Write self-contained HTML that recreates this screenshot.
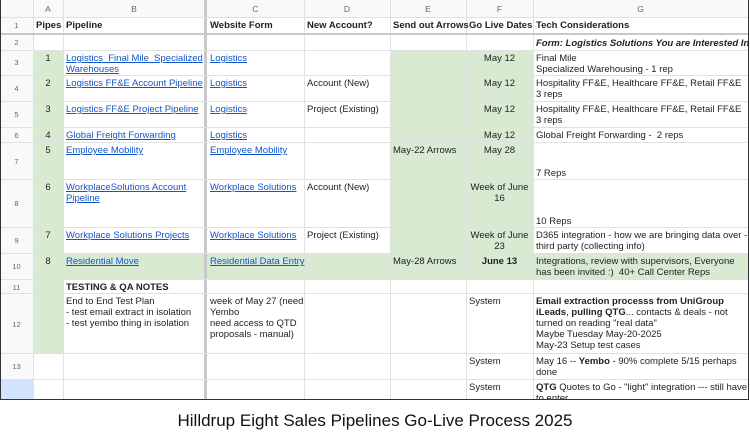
<!DOCTYPE html>
<html><head><meta charset="utf-8"><style>
body{margin:0;width:750px;height:438px;background:#fff;position:relative;overflow:hidden;font-family:"Liberation Sans",Arial,sans-serif;font-size:9.5px;color:#222}
.a{position:absolute}
.g{position:absolute;background:#d9ead3}
.vl{position:absolute;top:0;height:400px;width:1px;background:#e1e1e1}
.hl{position:absolute;left:0;width:748px;height:1px;background:#e1e1e1}
.t{position:absolute;line-height:11px;white-space:nowrap}
.l{color:#1155cc;text-decoration:underline}
.b{font-weight:bold}
.h{color:#666;font-size:8.5px;text-align:center}
.rn{position:absolute;left:0;width:33px;text-align:center;color:#666;font-size:7.5px}
.c{text-align:center}
</style></head><body>
<div class="a" style="left:0;top:0;width:748px;height:17px;background:#f8f9fa"></div>
<div class="a" style="left:0;top:0;width:33px;height:400px;background:#f8f9fa"></div>
<div class="a" style="left:0;top:379px;width:33px;height:21px;background:#d3e3fd"></div>
<div class="g" style="left:33px;top:50px;width:30px;height:303px"></div>
<div class="g" style="left:390px;top:50px;width:143px;height:229px"></div>
<div class="g" style="left:63px;top:253px;width:685px;height:26px"></div>
<div class="vl" style="left:33px"></div><div class="vl" style="left:63px"></div>
<div class="vl" style="left:204px;width:3px;background:#c8c8c8"></div>
<div class="vl" style="left:304px"></div><div class="vl" style="left:390px"></div>
<div class="vl" style="left:466px"></div><div class="vl" style="left:533px"></div>
<div class="hl" style="top:17px"></div>
<div class="hl" style="top:33px;height:2px;background:#c8c8c8"></div>
<div class="hl" style="top:50px"></div><div class="hl" style="top:75px"></div>
<div class="hl" style="top:101px"></div><div class="hl" style="top:127px"></div>
<div class="hl" style="top:142px"></div><div class="hl" style="top:179px"></div>
<div class="hl" style="top:227px"></div><div class="hl" style="top:253px"></div>
<div class="hl" style="top:279px"></div><div class="hl" style="top:293px"></div>
<div class="hl" style="top:353px"></div><div class="hl" style="top:379px"></div>
<div class="a" style="left:0;top:0;width:747px;height:399px;border:1px solid #333;border-top:none;box-sizing:content-box"></div>
<div class="t h" style="left:33px;top:4px;width:30px">A</div>
<div class="t h" style="left:63px;top:4px;width:142px">B</div>
<div class="t h" style="left:207px;top:4px;width:97px">C</div>
<div class="t h" style="left:304px;top:4px;width:86px">D</div>
<div class="t h" style="left:390px;top:4px;width:76px">E</div>
<div class="t h" style="left:466px;top:4px;width:67px">F</div>
<div class="t h" style="left:533px;top:4px;width:215px">G</div>
<div class="rn" style="top:21px">1</div><div class="rn" style="top:38px">2</div>
<div class="rn" style="top:58px">3</div><div class="rn" style="top:84px">4</div>
<div class="rn" style="top:110px">5</div><div class="rn" style="top:131px">6</div>
<div class="rn" style="top:157px">7</div><div class="rn" style="top:199px">8</div>
<div class="rn" style="top:236px">9</div><div class="rn" style="top:262px">10</div>
<div class="rn" style="top:283px">11</div><div class="rn" style="top:320px">12</div>
<div class="rn" style="top:362px">13</div>
<div class="t b" style="left:36px;top:20px">Pipes</div>
<div class="t b" style="left:66px;top:20px">Pipeline</div>
<div class="t b" style="left:210px;top:20px">Website Form</div>
<div class="t b" style="left:307px;top:20px">New Account?</div>
<div class="t b" style="left:393px;top:20px">Send out Arrows</div>
<div class="t b" style="left:469px;top:20px">Go Live Dates</div>
<div class="t b" style="left:536px;top:20px">Tech Considerations</div>
<div class="t b" style="left:536px;top:38px;font-style:italic">Form: Logistics Solutions You are Interested In</div>
<div class="t c" style="left:33px;top:53px;width:30px">1</div>
<div class="t c" style="left:33px;top:78px;width:30px">2</div>
<div class="t c" style="left:33px;top:104px;width:30px">3</div>
<div class="t c" style="left:33px;top:130px;width:30px">4</div>
<div class="t c" style="left:33px;top:145px;width:30px">5</div>
<div class="t c" style="left:33px;top:182px;width:30px">6</div>
<div class="t c" style="left:33px;top:230px;width:30px">7</div>
<div class="t c" style="left:33px;top:256px;width:30px">8</div>
<div class="t l" style="left:66px;top:53px">Logistics_Final Mile_Specialized<br>Warehouses</div>
<div class="t l" style="left:66px;top:78px">Logistics FF&amp;E Account Pipeline</div>
<div class="t l" style="left:66px;top:104px">Logistics FF&amp;E Project Pipeline</div>
<div class="t l" style="left:66px;top:130px">Global Freight Forwarding</div>
<div class="t l" style="left:66px;top:145px">Employee Mobility</div>
<div class="t l" style="left:66px;top:182px">WorkplaceSolutions Account<br>Pipeline</div>
<div class="t l" style="left:66px;top:230px">Workplace Solutions Projects</div>
<div class="t l" style="left:66px;top:256px">Residential Move</div>
<div class="t b" style="left:66px;top:282px">TESTING &amp; QA NOTES</div>
<div class="t" style="left:66px;top:296px">End to End Test Plan<br>- test email extract in isolation<br>- test yembo thing in isolation</div>
<div class="t l" style="left:210px;top:53px">Logistics</div>
<div class="t l" style="left:210px;top:78px">Logistics</div>
<div class="t l" style="left:210px;top:104px">Logistics</div>
<div class="t l" style="left:210px;top:130px">Logistics</div>
<div class="t l" style="left:210px;top:145px">Employee Mobility</div>
<div class="t l" style="left:210px;top:182px">Workplace Solutions</div>
<div class="t l" style="left:210px;top:230px">Workplace Solutions</div>
<div class="t l" style="left:210px;top:256px">Residential Data Entry</div>
<div class="t" style="left:210px;top:296px">week of May 27 (need<br>Yembo<br>need access to QTD<br>proposals - manual)</div>
<div class="t" style="left:307px;top:78px">Account (New)</div>
<div class="t" style="left:307px;top:104px">Project (Existing)</div>
<div class="t" style="left:307px;top:182px">Account (New)</div>
<div class="t" style="left:307px;top:230px">Project (Existing)</div>
<div class="t" style="left:393px;top:145px">May-22 Arrows</div>
<div class="t" style="left:393px;top:256px">May-28 Arrows</div>
<div class="t c" style="left:466px;top:53px;width:67px">May 12</div>
<div class="t c" style="left:466px;top:78px;width:67px">May 12</div>
<div class="t c" style="left:466px;top:104px;width:67px">May 12</div>
<div class="t c" style="left:466px;top:130px;width:67px">May 12</div>
<div class="t c" style="left:466px;top:145px;width:67px">May 28</div>
<div class="t c" style="left:466px;top:182px;width:67px">Week of June<br>16</div>
<div class="t c" style="left:466px;top:230px;width:67px">Week of June<br>23</div>
<div class="t c b" style="left:466px;top:256px;width:67px">June 13</div>
<div class="t" style="left:469px;top:296px">System</div>
<div class="t" style="left:469px;top:356px">System</div>
<div class="t" style="left:469px;top:382px">System</div>
<div class="t" style="left:536px;top:53px">Final Mile<br>Specialized Warehousing - 1 rep</div>
<div class="t" style="left:536px;top:78px">Hospitality FF&amp;E, Healthcare FF&amp;E, Retail FF&amp;E<br>3 reps</div>
<div class="t" style="left:536px;top:104px">Hospitality FF&amp;E, Healthcare FF&amp;E, Retail FF&amp;E<br>3 reps</div>
<div class="t" style="left:536px;top:130px">Global Freight Forwarding -&nbsp; 2 reps</div>
<div class="t" style="left:536px;top:168px">7 Reps</div>
<div class="t" style="left:536px;top:216px">10 Reps</div>
<div class="t" style="left:536px;top:230px">D365 integration - how we are bringing data over -<br>third party (collecting info)</div>
<div class="t" style="left:536px;top:256px">Integrations, review with supervisors, Everyone<br>has been invited :)&nbsp; 40+ Call Center Reps</div>
<div class="t" style="left:536px;top:296px"><b>Email extraction processs from UniGroup<br>iLeads</b>, <b>pulling QTG</b>... contacts &amp; deals - not<br>turned on reading "real data"<br>Maybe Tuesday May-20-2025<br>May-23 Setup test cases</div>
<div class="t" style="left:536px;top:356px">May 16 -- <b>Yembo</b> - 90% complete 5/15 perhaps<br>done</div>
<div class="a" style="left:536px;top:382px;width:211px;height:17px;overflow:hidden"><div class="t" style="left:0;top:0"><b>QTG</b> Quotes to Go - "light" integration --- still have<br>to enter</div></div>
<div class="a" style="left:0;top:411px;width:750px;text-align:center;font-size:17px;color:#111">Hilldrup Eight Sales Pipelines Go-Live Process 2025</div>
</body></html>
